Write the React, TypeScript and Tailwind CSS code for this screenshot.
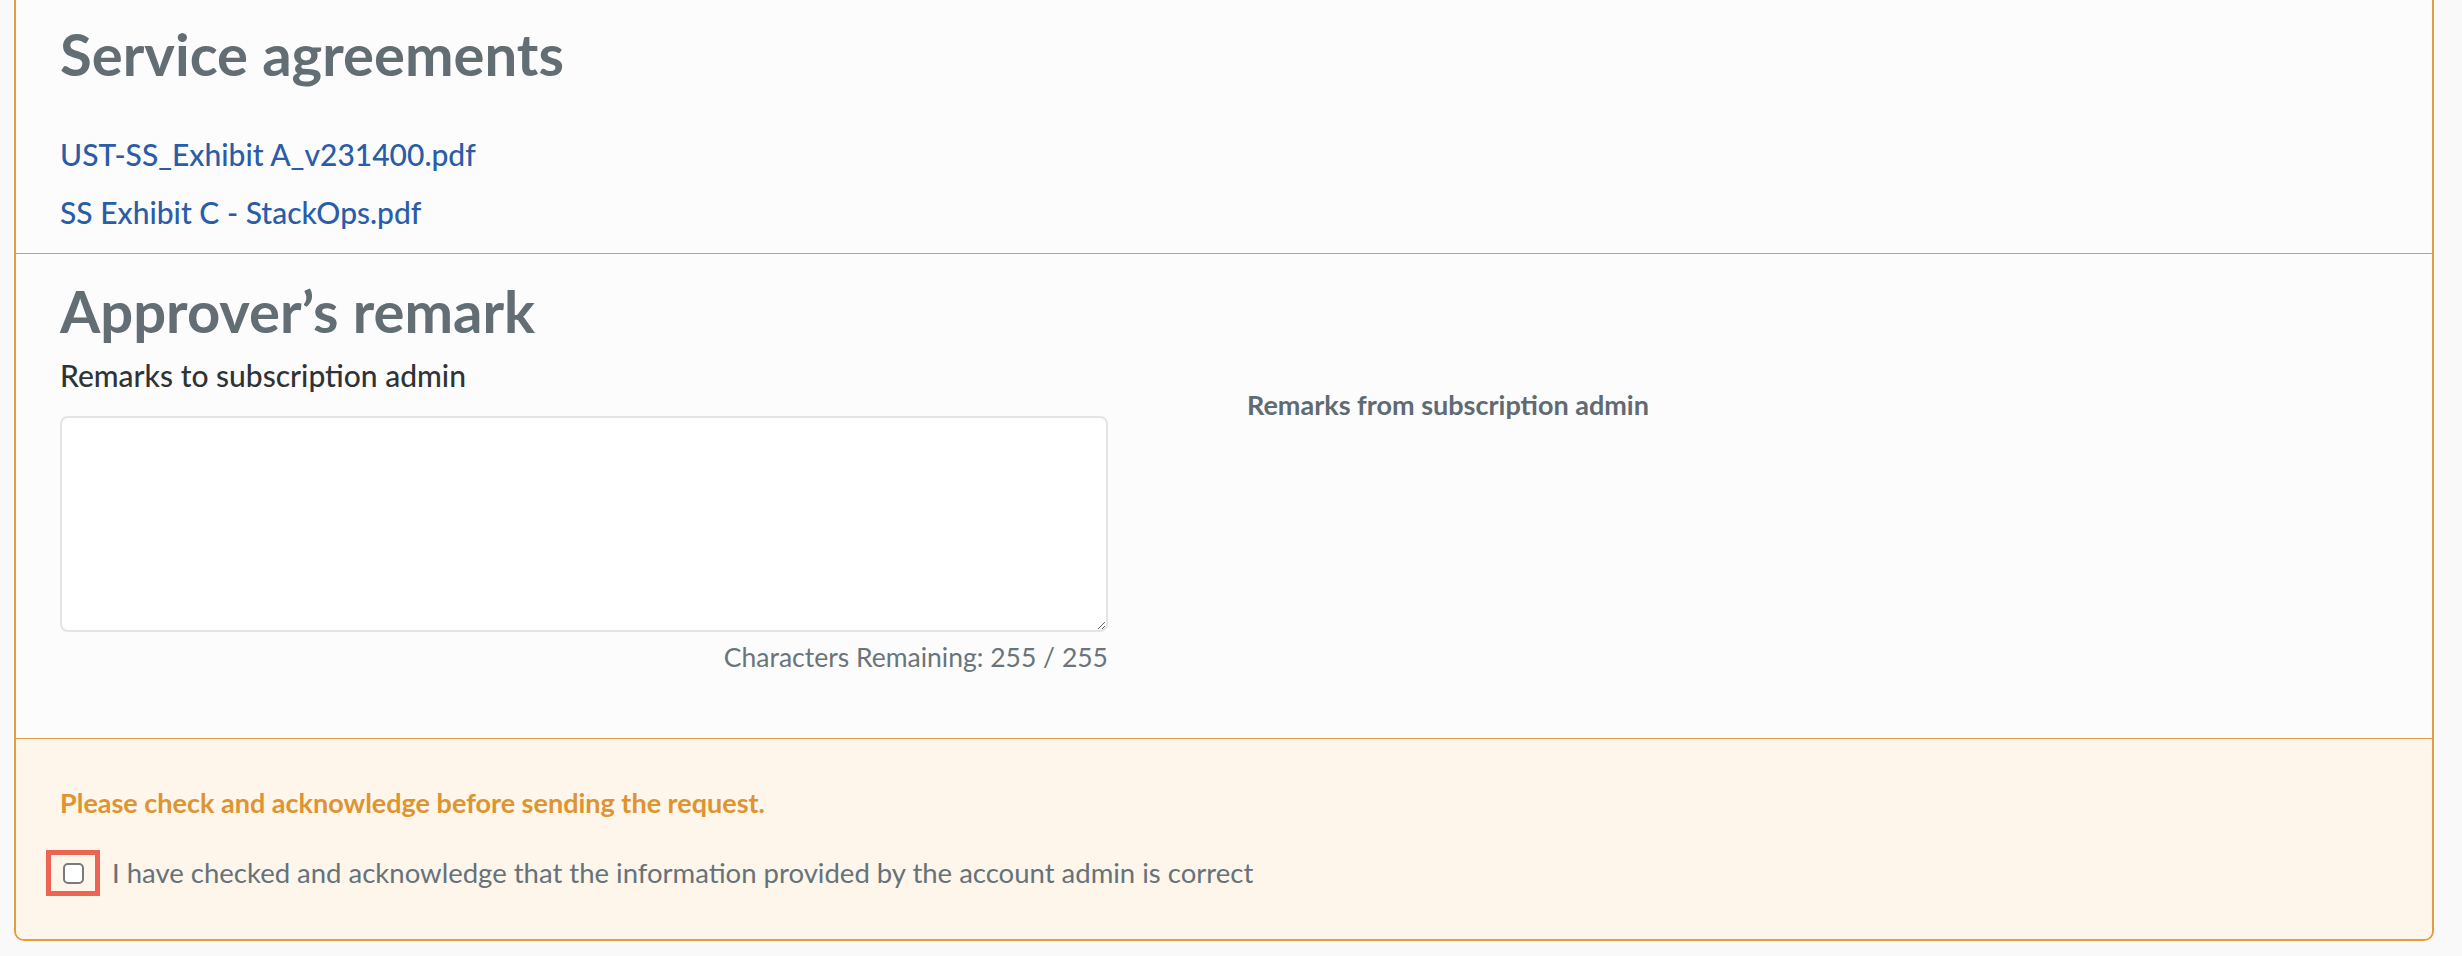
import { useState } from "react";

const App = () => {
    const [remark, setRemark] = useState("");
    const [checked, setChecked] = useState(false);
    const max = 255;

    return (
        <div className="min-h-screen bg-[#f9f9f9] pl-[14px] pr-[28px] pb-4 font-['Lato',sans-serif]">
            <div className="border-x-2 border-b-2 border-[#e29d3e] rounded-b-[10px] bg-[#fcfcfc] overflow-hidden">
                {/* Service agreements */}
                <section className="px-[44px] pt-[18px] pb-[23px] border-b border-[#e29d3e]">
                    <h2 className="text-[58px] leading-[72px] font-bold text-[#626d74]">
                        Service agreements
                    </h2>
                    <div className="mt-[46px] flex flex-col gap-[22px]">
                        <a href="#" className="text-[30px] leading-[36px] text-[#2a5ca8] font-medium w-fit">
                            UST-SS_Exhibit A_v231400.pdf
                        </a>
                        <a href="#" className="text-[30px] leading-[36px] text-[#2a5ca8] font-medium w-fit">
                            SS Exhibit C - StackOps.pdf
                        </a>
                    </div>
                </section>

                {/* Approver's remark */}
                <section className="px-[44px] pt-[25px] pb-[63px] border-b border-[#e29d3e]">
                    <h2 className="text-[58px] leading-[64px] font-bold text-[#626d74]">
                        Approver’s remark
                    </h2>
                    <div className="grid grid-cols-[1048px_1fr] gap-x-[139px]">
                        <div>
                            <label className="block mt-[12px] text-[30px] leading-[40px] font-medium text-[#2f3336]">
                                Remarks to subscription admin
                            </label>
                            <textarea
                                value={remark}
                                maxLength={max}
                                onChange={(e) => setRemark(e.target.value)}
                                className="mt-[21px] block w-full h-[216px] bg-white border-2 border-[#e4e4e4] rounded-[8px] p-3 outline-none"
                            />
                            <div className="mt-[7px] text-right text-[26.5px] leading-[36px] text-[#69747b]">
                                Characters Remaining: {max - remark.length} / {max}
                            </div>
                        </div>
                        <div className="pt-[44px] text-[27px] leading-[36px] font-bold text-[#5f6b73]">
                            Remarks from subscription admin
                        </div>
                    </div>
                </section>

                {/* Acknowledge */}
                <section className="bg-[#fef6ea] px-[44px] pt-[46px] pb-[43px]">
                    <p className="text-[27px] leading-[36px] font-bold text-[#dd9431]">
                        Please check and acknowledge before sending the request.
                    </p>
                    <label className="mt-[29px] flex items-center gap-[12px] -ml-[14px] cursor-pointer">
                        <span className="w-[54px] h-[46px] border-[5px] border-[#ec6553] flex items-center justify-center">
                            <input
                                type="checkbox"
                                checked={checked}
                                onChange={(e) => setChecked(e.target.checked)}
                                className="appearance-none w-[21px] h-[21px] border-2 border-[#7a7a7a] rounded-[5px] bg-white checked:bg-[#2a5ca8]"
                            />
                        </span>
                        <span className="text-[27.5px] leading-[36px] text-[#66727a]">
                            I have checked and acknowledge that the information provided by the account admin is correct
                        </span>
                    </label>
                </section>
            </div>
        </div>
    );
};

export default App;
